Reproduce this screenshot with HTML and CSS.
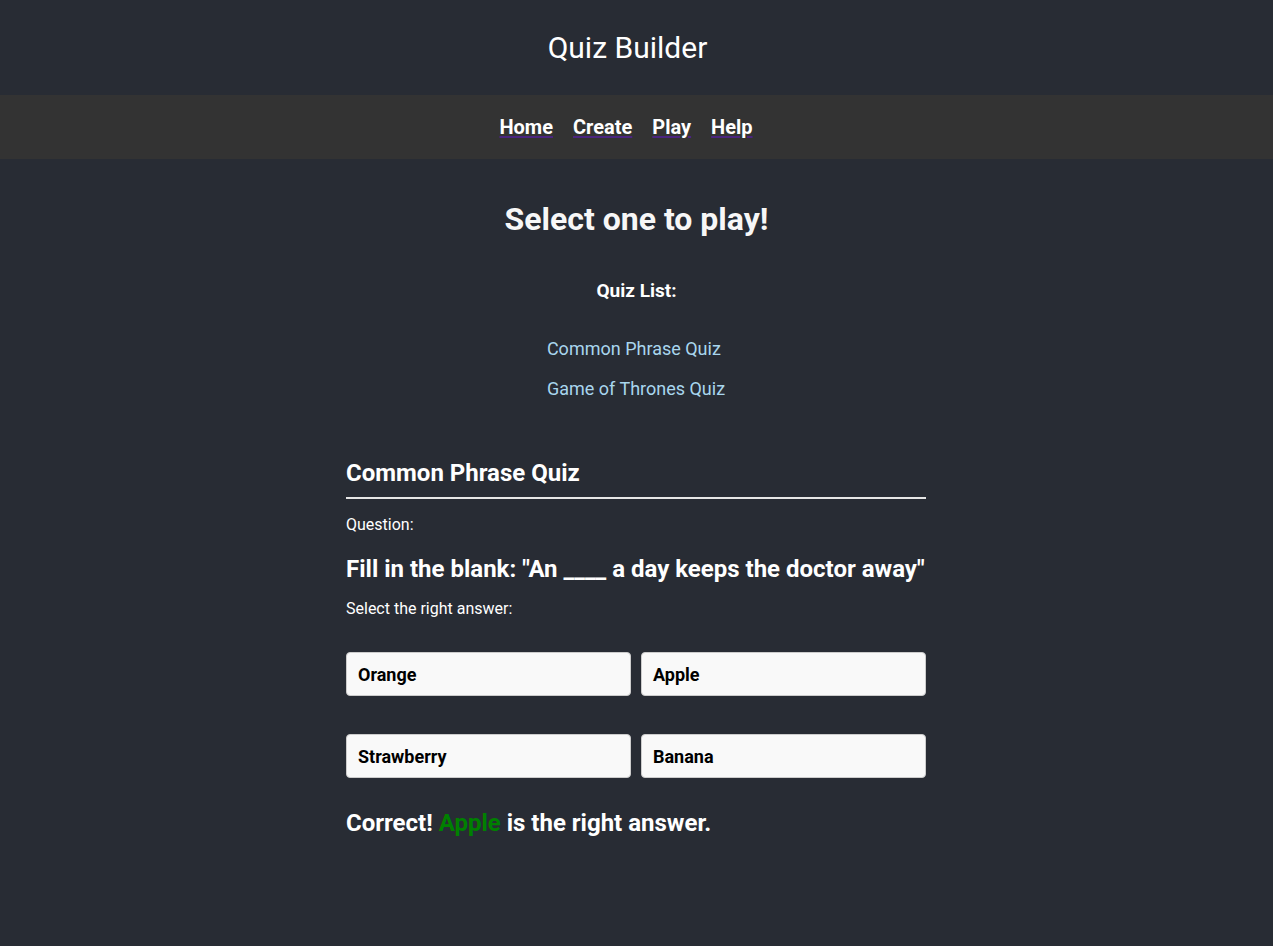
FILE: index.html
```html
<!DOCTYPE html>
<html>
<head>
<meta charset="utf-8">
<title>Quiz Builder</title>
<link rel="stylesheet" href="styles.css">
</head>
<body>
<header class="header">
  <h1 class="title">Quiz Builder</h1>
</header>
<nav class="nav">
  <a class="nav-link" href="#"><span>Home</span></a>
  <a class="nav-link" href="#"><span>Create</span></a>
  <a class="nav-link" href="#"><span>Play</span></a>
  <a class="nav-link" href="#"><span>Help</span></a>
</nav>
<main class="main">
  <h2 class="page-title">Select one to play!</h2>
  <h3 class="list-title">Quiz List:</h3>
  <ul class="quiz-list">
    <li><a class="quiz-link" href="#">Common Phrase Quiz</a></li>
    <li><a class="quiz-link" href="#">Game of Thrones Quiz</a></li>
  </ul>
  <section class="quiz">
    <h2 class="quiz-name">Common Phrase Quiz</h2>
    <p class="label">Question:</p>
    <h3 class="question">Fill in the blank: "An ____ a day keeps the doctor away"</h3>
    <p class="label label-answer">Select the right answer:</p>
    <div class="answers">
      <button class="answer">Orange</button>
      <button class="answer">Apple</button>
      <button class="answer">Strawberry</button>
      <button class="answer">Banana</button>
    </div>
    <p class="result">Correct! <span class="ok">Apple</span> is the right answer.</p>
  </section>
</main>
</body>
</html>
```
FILE: styles.css
```css
html, body {
  margin: 0;
  padding: 0;
  background: #282c34;
  color: #ffffff;
  font-family: Roboto, "Liberation Sans", sans-serif;
}
.header {
  height: 94px;
  padding-bottom: 1px;
  display: flex;
  align-items: center;
  justify-content: center;
}
.title {
  margin: 0 18px 0 0;
  font-size: 30px;
  font-weight: 400;
  color: #fff;
}
.nav {
  height: 64px;
  background: #333333;
  display: flex;
  align-items: center;
  justify-content: center;
  gap: 20px;
  padding-right: 21px;
}
.nav-link {
  color: #4b2580;
  text-decoration: underline;
  text-decoration-color: #4b2580;
  text-underline-offset: 2px;
  font-size: 20px;
  font-weight: 700;
}
.nav-link span {
  color: #ffffff;
}
.main {
  display: flex;
  flex-direction: column;
  align-items: center;
}
.page-title {
  margin: 41px 0 0;
  font-size: 32px;
  font-weight: 700;
  line-height: 38px;
  color: #f7f7f7;
}
.list-title {
  margin: 42px 0 0;
  font-size: 19px;
  font-weight: 700;
  line-height: 22px;
}
.quiz-list {
  list-style: none;
  margin: 36px 1px 0 0;
  padding: 0;
  display: flex;
  flex-direction: column;
  gap: 19px;
  align-items: flex-start;
}
.quiz-link {
  color: #a8d6ee;
  text-decoration: none;
  font-size: 18px;
  line-height: 21px;
}
.quiz {
  width: 580px;
  margin: 60px 1px 0 0;
}
.quiz-name {
  margin: 0;
  font-size: 24px;
  font-weight: 700;
  line-height: 28px;
  padding-bottom: 10px;
  border-bottom: 2px solid #e6e6e6;
}
.label {
  margin: 16px 0 0;
  font-size: 16px;
  line-height: 20px;
}
.question {
  margin: 20px 0 0;
  font-size: 24px;
  font-weight: 700;
  line-height: 28px;
  white-space: nowrap;
}
.label-answer {
  margin-top: 16px;
}
.answers {
  margin-top: 33px;
  display: grid;
  grid-template-columns: 1fr 1fr;
  column-gap: 10px;
  row-gap: 38px;
}
.answer {
  height: 44px;
  background: #f9f9f9;
  border: 1px solid #cccccc;
  border-radius: 4px;
  text-align: left;
  padding: 0 11px;
  font-family: Roboto, "Liberation Sans", sans-serif;
  font-size: 18px;
  font-weight: 700;
  color: #000;
}
.result {
  margin: 31px 0 0;
  font-size: 24px;
  font-weight: 700;
  line-height: 28px;
}
.ok {
  color: #008000;
}
```
